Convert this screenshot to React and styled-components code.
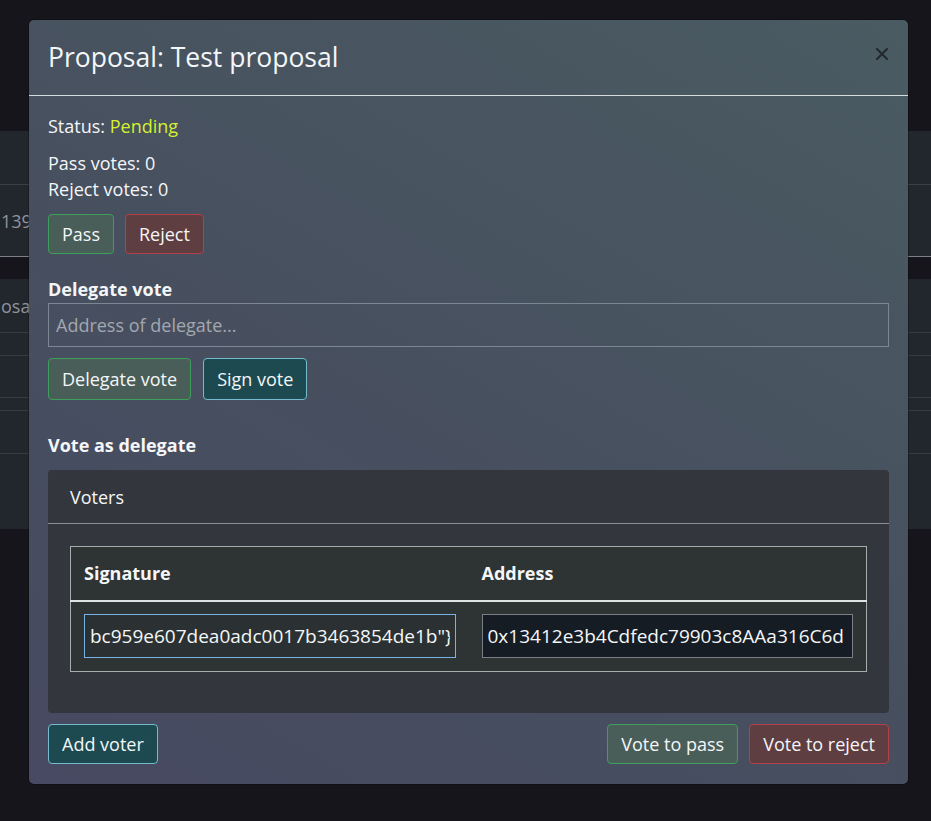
import React from "react";
import styled, { createGlobalStyle } from "styled-components";

const Global = createGlobalStyle`
  html, body { margin: 0; padding: 0; }
  body {
    background: #15151b;
    font-family: "Open Sans", "Noto Sans", sans-serif;
    color: #f4f6f8;
    width: 931px;
    height: 821px;
    overflow: hidden;
  }
  * { box-sizing: border-box; }
`;

const Page = styled.div`
  position: relative;
  width: 931px;
  height: 821px;
  background: #15151b;
  overflow: hidden;
`;

const Underlay = styled.div`
  padding-top: 131px;
  display: flex;
  flex-direction: column;
`;

const BgPanel = styled.div`
  height: ${(p) => p.$h}px;
  background: #22262d;
  margin-bottom: ${(p) => p.$mb || 0}px;
  display: flex;
  flex-direction: column;
`;

const BgRow = styled.div`
  height: ${(p) => p.$h}px;
  border-bottom: 1px solid ${(p) => p.$c || "#363b42"};
  color: #8f949a;
  font-size: 18px;
  display: flex;
  align-items: center;
  padding-left: 1px;
`;

const Backdrop = styled.div`
  position: absolute;
  inset: 0;
  display: flex;
  justify-content: flex-start;
  align-items: flex-start;
  padding: 20px 0 0 29px;
`;

const Modal = styled.div`
  width: 879px;
  border-radius: 5px;
  background: linear-gradient(30deg, #474a62 0%, #47505f 50%, #4a5b62 100%);
  box-shadow: 0 0 0 1px rgba(0, 0, 0, 0.25);
  display: flex;
  flex-direction: column;
`;

const Header = styled.div`
  display: flex;
  align-items: center;
  justify-content: space-between;
  height: 76px;
  padding: 0 16px 0 19px;
  border-bottom: 1px solid #d5dde0;
`;

const Title = styled.h2`
  margin: 0;
  font-size: 26.5px;
  font-weight: 400;
  margin-top: -2px;
`;

const Close = styled.button`
  background: none;
  border: none;
  padding: 0;
  width: 20px;
  height: 20px;
  display: flex;
  align-items: center;
  justify-content: center;
  margin-top: -8px;
  cursor: pointer;
`;

const Body = styled.div`
  padding: 17px 19px 20px;
  display: flex;
  flex-direction: column;
`;

const Line = styled.div`
  font-size: 18px;
  line-height: 26px;
  margin-bottom: ${(p) => p.$mb || 0}px;
`;

const Pending = styled.span`
  color: #d6f02e;
`;

const ButtonRow = styled.div`
  display: flex;
  gap: ${(p) => p.$gap || 11}px;
  justify-content: ${(p) => p.$justify || "flex-start"};
  margin-bottom: ${(p) => p.$mb || 0}px;
`;

const variants = {
  success: { bg: "#4a5e59", border: "#3d9f5a" },
  danger: { bg: "#5e3e41", border: "#b3404a" },
  info: { bg: "#1d4a51", border: "#74bccc" },
};

const Button = styled.button`
  font-family: inherit;
  font-size: 18px;
  color: #f4f6f8;
  height: ${(p) => p.$h || 40}px;
  padding: 0 13px;
  border-radius: 4px;
  background: ${(p) => variants[p.$v].bg};
  border: 1px solid ${(p) => variants[p.$v].border};
  cursor: pointer;
`;

const Label = styled.div`
  font-size: 18px;
  font-weight: 700;
  line-height: 24px;
  margin-bottom: ${(p) => p.$mb || 0}px;
`;

const TextInput = styled.input`
  font-family: inherit;
  font-size: 18px;
  height: 44px;
  width: 100%;
  padding: 0 7px;
  background: transparent;
  border: 1px solid #7c8794;
  color: #f4f6f8;
  margin-bottom: 11px;
  outline: none;
  &::placeholder {
    color: #a3a8b0;
  }
`;

const Card = styled.div`
  background: #33363d;
  border-radius: 4px;
  display: flex;
  flex-direction: column;
  margin-bottom: 11px;
`;

const CardHeader = styled.div`
  height: 54px;
  padding: 0 22px;
  display: flex;
  align-items: center;
  font-size: 18px;
  border-bottom: 1px solid #8b9096;
`;

const CardBody = styled.div`
  padding: 22px 22px 41px 22px;
`;

const Table = styled.table`
  width: 100%;
  border-collapse: collapse;
  border: 1px solid #a7acaf;
  background: #2e3333;
  table-layout: fixed;
`;

const Th = styled.th`
  text-align: left;
  font-weight: 700;
  font-size: 18px;
  height: 54px;
  padding: 0 13px;
  border-bottom: 2px solid #dde2e4;
`;

const Td = styled.td`
  padding: 12px 13px 13px;
`;

const CellInput = styled.input`
  font-family: inherit;
  font-size: 19px;
  width: 100%;
  height: 44px;
  padding: 0 5px;
  color: #f4f6f8;
  outline: none;
  background: ${(p) => (p.$focus ? "#2b3132" : "#161c24")};
  border: 1px solid ${(p) => (p.$focus ? "#79b2e6" : "#7a7f85")};
`;

const Footer = styled.div`
  display: flex;
  justify-content: space-between;
`;

export default function App() {
  return (
    <Page>
      <Global />
      <Underlay>
        <BgPanel $h={126} $mb={22}>
          <BgRow $h={54} $c="#3b4048" />
          <BgRow $h={72} $c="#7d8288">139</BgRow>
        </BgPanel>
        <BgPanel $h={250}>
          <BgRow $h={54}>osal</BgRow>
          <BgRow $h={23} />
          <BgRow $h={42} />
          <BgRow $h={13} />
          <BgRow $h={43} />
        </BgPanel>
      </Underlay>
      <Backdrop>
        <Modal>
          <Header>
            <Title>Proposal: Test proposal</Title>
            <Close aria-label="Close">
              <svg width="14" height="14" viewBox="0 0 14 14">
                <path
                  d="M2 2 L12 12 M12 2 L2 12"
                  stroke="#1d2226"
                  strokeWidth="2.2"
                  strokeLinecap="round"
                  opacity="0.85"
                />
              </svg>
            </Close>
          </Header>
          <Body>
            <Line $mb={11}>
              Status: <Pending>Pending</Pending>
            </Line>
            <Line>Pass votes: 0</Line>
            <Line $mb={12}>Reject votes: 0</Line>
            <ButtonRow $mb={23}>
              <Button $v="success">Pass</Button>
              <Button $v="danger">Reject</Button>
            </ButtonRow>
            <Label $mb={2}>Delegate vote</Label>
            <TextInput placeholder="Address of delegate..." />
            <ButtonRow $gap={12} $mb={33}>
              <Button $v="success" $h={42}>
                Delegate vote
              </Button>
              <Button $v="info" $h={42}>
                Sign vote
              </Button>
            </ButtonRow>
            <Label $mb={13}>Vote as delegate</Label>
            <Card>
              <CardHeader>Voters</CardHeader>
              <CardBody>
                <Table>
                  <thead>
                    <tr>
                      <Th>Signature</Th>
                      <Th>Address</Th>
                    </tr>
                  </thead>
                  <tbody>
                    <tr>
                      <Td>
                        <CellInput $focus readOnly value={'bc959e607dea0adc0017b3463854de1b"}'} />
                      </Td>
                      <Td>
                        <CellInput readOnly value="0x13412e3b4Cdfedc79903c8AAa316C6d" />
                      </Td>
                    </tr>
                  </tbody>
                </Table>
              </CardBody>
            </Card>
            <Footer>
              <Button $v="info">Add voter</Button>
              <ButtonRow $gap={11}>
                <Button $v="success">Vote to pass</Button>
                <Button $v="danger">Vote to reject</Button>
              </ButtonRow>
            </Footer>
          </Body>
        </Modal>
      </Backdrop>
    </Page>
  );
}
